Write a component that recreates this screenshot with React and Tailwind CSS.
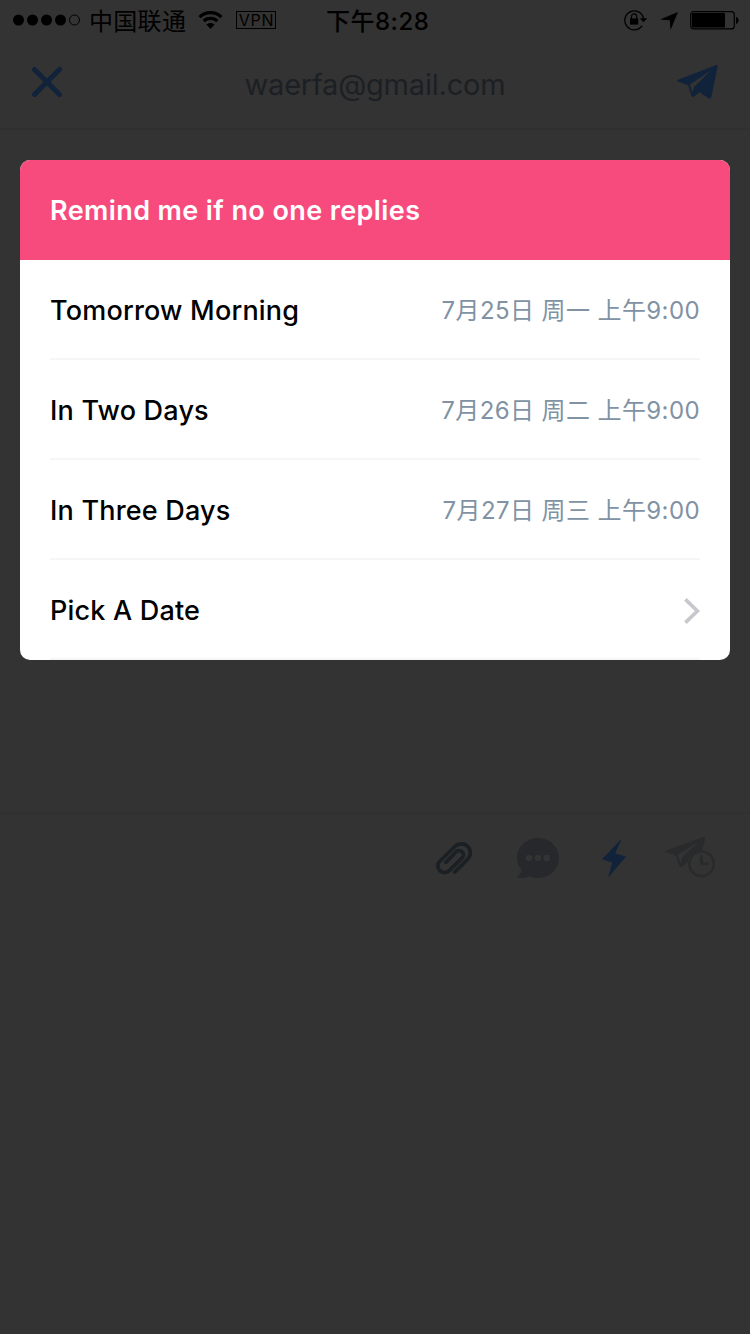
import React from "react";

const reminders = [
  { label: "Tomorrow Morning", date: "7月25日 周一 上午9:00" },
  { label: "In Two Days", date: "7月26日 周二 上午9:00" },
  { label: "In Three Days", date: "7月27日 周三 上午9:00" },
  { label: "Pick A Date" },
];

const StatusBar = () => {
  return (
    <div className="grid h-10 grid-cols-[315px_1fr_315px] items-center text-black">
      <div className="flex items-center pl-[13px]">
        <svg width="68" height="12" viewBox="0 0 68 12">
          <circle cx="5.5" cy="6" r="5.5" />
          <circle cx="19.5" cy="6" r="5.5" />
          <circle cx="33.5" cy="6" r="5.5" />
          <circle cx="47.5" cy="6" r="5.5" />
          <circle cx="61.5" cy="6" r="5" fill="none" stroke="currentColor" />
        </svg>
        <span className="ml-2 w-[98px] whitespace-nowrap pt-1 text-2xl leading-9 tracking-[0.3px]">
          中国联通
        </span>
        <svg className="ml-[11px]" width="25" height="20" viewBox="0 0 25 20">
          <g fill="none" stroke="currentColor" strokeWidth="3.2">
            <path d="M1.6 7.2 C7.6 1.2 17.4 1.2 23.4 7.2" />
            <path d="M5.7 11.2 C9.4 7.5 15.6 7.5 19.3 11.2" />
          </g>
          <path d="M8.4 14.6 C10.7 12.3 14.3 12.3 16.6 14.6 L12.5 18.9 Z" />
        </svg>
        <span className="ml-[13px] flex h-[18px] w-10 items-center justify-center border border-black pl-px text-base tracking-[0.8px]">
          VPN
        </span>
      </div>
      <span className="whitespace-nowrap pl-[11px] pt-1 text-2xl font-medium leading-9 tracking-[0.5px]">
        下午8:28
      </span>
      <div className="flex items-center justify-end pr-[11px]">
        <svg width="24" height="22" viewBox="0 0 24 22">
          <path
            d="M18.2 16.6 A9.5 9.5 0 1 1 19.6 9.5"
            fill="none"
            stroke="currentColor"
            strokeWidth="1.3"
          />
          <path d="M15.8 9.3 H23.2 L19.5 13.3 Z" />
          <rect x="6" y="9.4" width="8.2" height="6.2" />
          <path
            d="M7.5 10 V7.4 A2.6 2.6 0 0 1 12.7 7.4 V10"
            fill="none"
            stroke="currentColor"
            strokeWidth="1.2"
          />
        </svg>
        <svg className="ml-3 mt-0.5" width="18" height="18" viewBox="0 0 18 18">
          <path d="M18 0 L10.5 18 L9.8 8.2 L0 7.6 Z" />
        </svg>
        <svg className="ml-3" width="49" height="20" viewBox="0 0 49 20">
          <rect
            x="0.7"
            y="1.7"
            width="43.6"
            height="17.2"
            rx="3"
            fill="none"
            stroke="currentColor"
            strokeWidth="1.2"
          />
          <rect x="2" y="3" width="33" height="14.6" rx="1.2" />
          <path d="M46 7 C49.5 7.8 49.5 13 46 13.8 Z" />
        </svg>
      </div>
    </div>
  );
};

const Header = () => {
  return (
    <div className="grid h-[90px] grid-cols-[100px_1fr_100px] items-center border-b-2 border-[#303030] text-[#11233a]">
      <svg className="mb-1 ml-[31px]" width="32" height="32" viewBox="0 0 32 32">
        <path
          d="M3.5 3.5 L28.5 28.5 M28.5 3.5 L3.5 28.5"
          stroke="currentColor"
          strokeWidth="5"
          strokeLinecap="round"
        />
      </svg>
      <span className="pt-0.5 text-center text-[29px] tracking-[-0.2px] text-[#1c2024]">
        waerfa@gmail.com
      </span>
      <svg
        className="mb-1 ml-[27px]"
        width="41"
        height="36"
        viewBox="0 0 41 36"
        fill="currentColor"
      >
        <path d="M38.6 1.2 Q41 0.4 40.6 2.8 L34.4 33 Q33.6 35.4 31.4 34.2 L22.6 28.2 L17 32.6 Q15.2 33.8 14.4 31.8 L11 21.2 L1 17.6 Q-0.6 16.6 1 15.8 Z" />
        <path d="M34 6.6 L12.8 20.4 L15.6 28.6 L17 23 Z" fill="#333333" />
      </svg>
    </div>
  );
};

const Toolbar = () => {
  return (
    <div className="flex h-[90px] items-center border-t-2 border-[#303030] pl-[436px]">
      <svg width="36" height="34" viewBox="0 0 36 34">
        <path
          d="M18.8 31 L31.2 18.6 A8.3 8.3 0 0 0 19.4 5 L3.8 20.3 A6.6 6.6 0 0 0 13.2 29.6 L26.4 16.6 A4.3 4.3 0 0 0 20.4 10.5 L9.8 21.4"
          fill="none"
          stroke="#1b2024"
          strokeWidth="3.7"
          strokeLinecap="round"
          strokeLinejoin="round"
        />
      </svg>
      <svg className="ml-[45px]" width="42" height="40" viewBox="0 0 42 40">
        <path
          d="M21 0 C32.6 0 42 9 42 20 C42 31 32.6 40 21 40 C17.6 40 14.8 39.4 12.2 38 C8.6 40 4.6 40.4 0.4 39.6 Q-0.4 39 0.6 38.4 C3.4 36.4 4.6 34.4 4.6 31.6 C1.6 28.4 0 24.6 0 20 C0 9 9.4 0 21 0 Z"
          fill="#26282b"
        />
        <g fill="#333333">
          <circle cx="12" cy="20" r="3.3" />
          <circle cx="21" cy="20" r="3.3" />
          <circle cx="29.7" cy="20" r="3.3" />
        </g>
      </svg>
      <svg className="ml-[43px]" width="24" height="40" viewBox="0 0 24 40">
        <path
          d="M19.8 0.5 L0 21.2 L10.4 24.6 L6 39.8 L24 18.6 L13.2 15.6 Z"
          fill="#11233a"
        />
      </svg>
      <svg className="mb-0.5 ml-[39px]" width="50" height="42" viewBox="0 0 50 42">
        <path
          d="M39.2 0.8 Q40.6 0.2 40.2 1.8 L37.4 14.6 C29.4 14 23 20 22.4 26.4 L16.4 31 Q15 31.6 14.4 30 L10.8 19.6 L0.8 16.2 Q-0.4 15.6 0.8 14.8 Z"
          fill="#282a2b"
        />
        <path d="M34 5.6 L12.4 18.8 L15.6 27.6 L17 21.4 Z" fill="#333333" />
        <circle
          cx="36.5"
          cy="27.8"
          r="12.2"
          fill="#333333"
          stroke="#282a2b"
          strokeWidth="2.4"
        />
        <path
          d="M36.5 20.6 V27.8 H42.6"
          fill="none"
          stroke="#282a2b"
          strokeWidth="2.8"
          strokeLinecap="round"
          strokeLinejoin="round"
        />
      </svg>
    </div>
  );
};

const ReminderRow = ({ label, date }) => {
  return (
    <div className="flex h-[100px] items-center justify-between border-b-2 border-[#f5f6f7] pt-1">
      <span className="text-[27px] font-medium tracking-[0.2px] text-black">
        {label}
      </span>
      {date ? (
        <span className="whitespace-nowrap text-2xl tracking-[0.4px] text-[#8092a3]">
          {date}
        </span>
      ) : (
        <svg width="16" height="26" viewBox="0 0 16 26">
          <path
            d="M1.4 1.4 L13.4 13 L1.4 24.6"
            fill="none"
            stroke="#c7c7cc"
            strokeWidth="3.6"
          />
        </svg>
      )}
    </div>
  );
};

const ReminderCard = () => {
  return (
    <div className="mx-5 mt-[30px] overflow-hidden rounded-[10px] bg-white">
      <div className="flex h-[100px] items-center bg-[#f74b7e] px-[30px] pt-0.5 text-[27px] font-semibold tracking-[0.4px] text-white">
        Remind me if no one replies
      </div>
      <div className="px-[30px]">
        {reminders.map((item) => (
          <ReminderRow key={item.label} label={item.label} date={item.date} />
        ))}
      </div>
    </div>
  );
};

const App = () => {
  return (
    <div className="flex h-[1334px] w-[750px] flex-col overflow-hidden bg-[#333333] font-['Inter','Noto_Sans_CJK_SC',sans-serif]">
      <StatusBar />
      <Header />
      <div className="h-[682px]">
        <ReminderCard />
      </div>
      <Toolbar />
    </div>
  );
};

export default App;
